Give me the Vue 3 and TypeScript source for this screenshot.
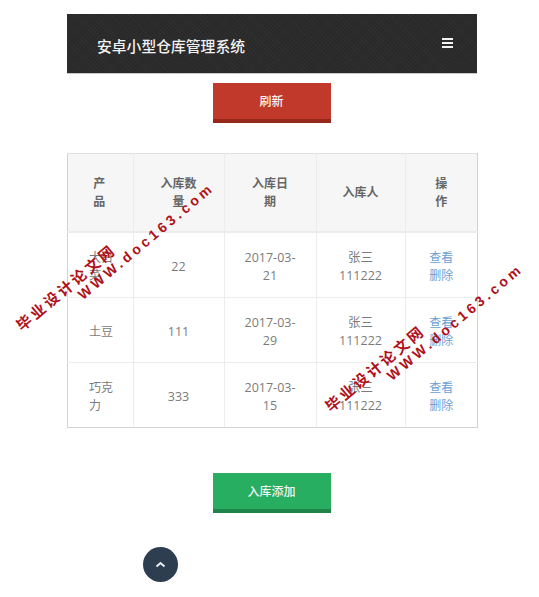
<script setup lang="ts">
interface Row { name: string; qty: string; date: string; person: string }
const rows: Row[] = [
  { name: '大白菜', qty: '22', date: '2017-03-21', person: '张三111222' },
  { name: '土豆', qty: '111', date: '2017-03-29', person: '张三111222' },
  { name: '巧克力', qty: '333', date: '2017-03-15', person: '张三111222' },
]
const marks = ['mark-a', 'mark-b']
</script>

<template>
  <div class="page">
    <header class="bar">
      <span class="title">安卓小型仓库管理系统</span>
      <span class="burger"><i></i><i></i><i></i></span>
    </header>
    <div class="action first"><button class="btn red">刷新</button></div>
    <table class="grid">
      <colgroup>
        <col class="c1" /><col class="c2" /><col class="c3" /><col class="c4" /><col class="c5" />
      </colgroup>
      <thead>
        <tr>
          <th><span class="n1">产品</span></th>
          <th><span class="n2">入库数量</span></th>
          <th><span class="n2">入库日期</span></th>
          <th>入库人</th>
          <th><span class="n1">操作</span></th>
        </tr>
      </thead>
      <tbody>
        <tr v-for="r in rows" :key="r.name">
          <td class="name"><span class="n3">{{ r.name }}</span></td>
          <td>{{ r.qty }}</td>
          <td><span class="d">{{ r.date }}</span></td>
          <td><span class="p">{{ r.person }}</span></td>
          <td class="links"><a>查看</a><a>删除</a></td>
        </tr>
      </tbody>
    </table>
    <div class="action second"><button class="btn green">入库添加</button></div>
    <div class="top-btn">
      <svg width="11" height="7" viewBox="0 0 11 7"><path d="M1.5 5.5 L5.5 2 L9.5 5.5" fill="none" stroke="#e8edf2" stroke-width="2" /></svg>
    </div>
    <div v-for="m in marks" :key="m" class="mark" :class="m">
      <div class="cn">毕业设计论文网</div>
      <div class="en">WWW.doc163.com</div>
    </div>
  </div>
</template>

<style>
html, body { margin: 0; background: #fff; }
</style>

<style scoped>
.page {
  position: relative;
  width: 539px;
  height: 597px;
  overflow: hidden;
  padding: 14px 62px 0 67px;
  box-sizing: border-box;
  font-family: "Open Sans", "Noto Sans CJK SC", sans-serif;
  color: #7b7b7b;
  font-size: 12.5px;
}
.bar {
  height: 60px;
  background-color: #2b2b2b;
  background-image:
    repeating-linear-gradient(45deg, rgba(255,255,255,0.02) 0 1px, transparent 1px 3px),
    repeating-linear-gradient(-45deg, rgba(0,0,0,0.08) 0 1px, transparent 1px 3px);
  display: flex;
  align-items: center;
  justify-content: space-between;
  padding: 0 24px 0 30px;
  color: #f2f2f2;
  border-bottom: 1px solid #c9c9c9;
  box-sizing: border-box;
}
.title { font-size: 14.8px; font-weight: 500; position: relative; top: 2px; }
.burger { display: flex; flex-direction: column; gap: 2px; position: relative; top: -1px; }
.burger i { display: block; width: 11px; height: 2px; background: #f2f2f2; }
.action { display: flex; justify-content: center; padding-right: 1px; }
.action.first { margin-top: 9px; }
.action.second { margin-top: 45px; }
.btn {
  width: 118px;
  height: 40px;
  border: 0;
  padding: 0;
  color: #f4f4f4;
  font-family: inherit;
  font-size: 12px;
  font-weight: 500;
  box-sizing: border-box;
}
.red { background: #c0392b; border-bottom: 4px solid #96281b; }
.green { background: #27ae60; border-bottom: 4px solid #1e8449; }
.grid {
  margin-top: 30px;
  width: 410px;
  border-collapse: collapse;
  table-layout: fixed;
}
.c1 { width: 65.5px; } .c2 { width: 91px; } .c3 { width: 92px; } .c4 { width: 89px; } .c5 { width: 72.5px; }
th, td {
  border: 1px solid #ececec;
  text-align: center;
  padding: 0;
  line-height: 18px;
}
th:first-child, td:first-child { border-left-color: #d2d2d2; }
th:last-child, td:last-child { border-right-color: #d2d2d2; }
th { border-top-color: #e0e0e0; }
tbody tr:last-child td { border-bottom-color: #d2d2d2; }
th {
  height: 77px;
  background: #f6f6f6;
  color: #666;
  font-size: 12px;
  font-weight: 700;
  border-bottom-width: 2px;
}
th:first-child span { position: relative; left: -1px; }
td { height: 65px; box-sizing: border-box; padding-top: 4px; }
th span, td span { display: inline-block; }
td.name { text-align: left; padding-left: 21px; font-size: 12px; }
.n1 { width: 14px; }
.n2 { width: 38px; }
.n3 { width: 26px; }
.d { width: 58px; }
.p { width: 46px; }
.links { font-size: 12px; }
.links a { display: block; color: #6a9fd4; }
.top-btn {
  position: absolute;
  left: 143px;
  top: 547px;
  width: 35px;
  height: 35px;
  border-radius: 50%;
  background: #2c3e50;
  display: flex;
  align-items: center;
  justify-content: center;
}
.mark {
  position: absolute;
  color: #b0101a;
  font-weight: 700;
  font-family: "Liberation Sans", "Noto Sans CJK SC", sans-serif;
  transform: rotate(-40deg);
  transform-origin: left top;
  white-space: nowrap;
}
.mark-a { left: 13px; top: 321px; }
.mark-b { left: 322px; top: 402px; }
.cn { font-size: 15px; letter-spacing: 2.8px; line-height: 18px; }
.en { font-size: 14px; letter-spacing: 3.5px; line-height: 14px; margin-left: 67px; margin-top: -1px; }
</style>
